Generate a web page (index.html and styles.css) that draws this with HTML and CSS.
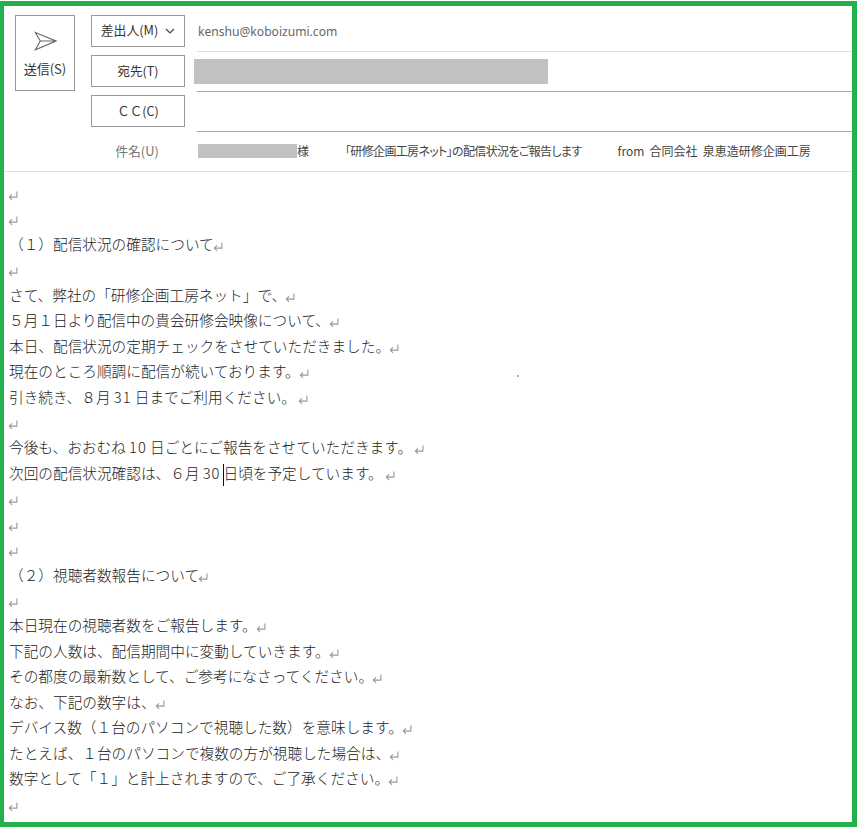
FILE: index.html
```html
<!DOCTYPE html>
<html lang="ja">
<head>
<meta charset="utf-8">
<title>メール作成</title>
<link rel="stylesheet" href="styles.css">
</head>
<body>
<svg class="defs" width="0" height="0" aria-hidden="true"><symbol id="ret" viewBox="0 0 9 9"><path d="M8 .5v5H1.2M3.6 3 1.2 5.5 3.6 8" fill="none" stroke="currentColor" stroke-width="1"/></symbol></svg>
<main class="frame">
  <header class="head">
    <button class="send">
      <svg class="send-icon" width="24" height="20" viewBox="0 0 24 20"><path d="M2.3 1.5 23 10 2.3 18.8 7.3 10ZM7.3 10H23" fill="none" stroke="#666" stroke-width="1.1" stroke-linejoin="miter"/></svg>
      <span>送信(S)</span>
    </button>
    <div class="fields">
      <div class="row">
        <button class="btn btn-from">差出人(M)<svg class="chev" width="10" height="6" viewBox="0 0 10 6"><path d="M1 1l4 4 4-4" fill="none" stroke="#444" stroke-width="1.2"/></svg></button>
        <div class="field field-light"><span class="from">kenshu@koboizumi.com</span></div>
      </div>
      <div class="row">
        <button class="btn">宛先(T)</button>
        <div class="field"><div class="redact-to"></div></div>
      </div>
      <div class="row">
        <button class="btn">ＣＣ(C)</button>
        <div class="field"></div>
      </div>
      <div class="row row-subject">
        <div class="label">件名(U)</div>
        <div class="subject">
          <span class="redact-name"></span><span class="sama">様</span>
          <span class="subj-title">「研修企画工房ネット」の配信状況をご報告します</span>
          <span class="subj-from">from 合同会社 泉恵造研修企画工房</span>
        </div>
      </div>
    </div>
  </header>
  <section class="body">
    <div class="line"><svg class="ret"><use href="#ret"/></svg></div>
    <div class="line"><svg class="ret"><use href="#ret"/></svg></div>
    <div class="line">（１）配信状況の確認について<svg class="ret"><use href="#ret"/></svg></div>
    <div class="line"><svg class="ret"><use href="#ret"/></svg></div>
    <div class="line">さて、弊社の「研修企画工房ネット」で、<svg class="ret"><use href="#ret"/></svg></div>
    <div class="line">５月１日より配信中の貴会研修会映像について、<svg class="ret"><use href="#ret"/></svg></div>
    <div class="line">本日、配信状況の定期チェックをさせていただきました。<svg class="ret"><use href="#ret"/></svg></div>
    <div class="line">現在のところ順調に配信が続いております。<svg class="ret"><use href="#ret"/></svg></div>
    <div class="line">引き続き、８月 <span class="num">31</span> 日までご利用ください。<svg class="ret"><use href="#ret"/></svg></div>
    <div class="line"><svg class="ret"><use href="#ret"/></svg></div>
    <div class="line">今後も、おおむね <span class="num">10</span> 日ごとにご報告をさせていただきます。<svg class="ret"><use href="#ret"/></svg></div>
    <div class="line">次回の配信状況確認は、６月 <span class="num">30</span><span class="caret"></span>日頃を予定しています。<svg class="ret"><use href="#ret"/></svg></div>
    <div class="line"><svg class="ret"><use href="#ret"/></svg></div>
    <div class="line"><svg class="ret"><use href="#ret"/></svg></div>
    <div class="line"><svg class="ret"><use href="#ret"/></svg></div>
    <div class="line">（２）視聴者数報告について<svg class="ret"><use href="#ret"/></svg></div>
    <div class="line"><svg class="ret"><use href="#ret"/></svg></div>
    <div class="line">本日現在の視聴者数をご報告します。<svg class="ret"><use href="#ret"/></svg></div>
    <div class="line">下記の人数は、配信期間中に変動していきます。<svg class="ret"><use href="#ret"/></svg></div>
    <div class="line">その都度の最新数として、ご参考になさってください。<svg class="ret"><use href="#ret"/></svg></div>
    <div class="line">なお、下記の数字は、<svg class="ret"><use href="#ret"/></svg></div>
    <div class="line">デバイス数（１台のパソコンで視聴した数）を意味します。<svg class="ret"><use href="#ret"/></svg></div>
    <div class="line">たとえば、１台のパソコンで複数の方が視聴した場合は、<svg class="ret"><use href="#ret"/></svg></div>
    <div class="line">数字として「１」と計上されますので、ご了承ください。<svg class="ret"><use href="#ret"/></svg></div>
    <div class="line"><svg class="ret"><use href="#ret"/></svg></div>
  </section>
  <span class="speck"></span>
</main>
</body>
</html>
```
FILE: styles.css
```css
* { box-sizing: border-box; }
html, body { margin: 0; padding: 0; background: #fff; }
body {
  width: 857px;
  height: 827px;
  padding-top: 1px;
  overflow: hidden;
  font-family: "Noto Sans CJK JP", "Noto Sans", sans-serif;
  color: #333;
}
.defs { position: absolute; }
.frame {
  position: relative;
  height: 826px;
  border: solid #22b14c;
  border-width: 5px 5px 5px 4px;
  overflow: hidden;
}
.speck { position: absolute; left: 513px; top: 369px; width: 2px; height: 2px; background: #aaa; }
.head {
  display: flex;
  gap: 16px;
  height: 166px;
  padding: 9px 0 0 11px;
  border-bottom: 1px solid #e0e0e0;
}
.send {
  display: flex;
  flex-direction: column;
  align-items: center;
  gap: 9px;
  width: 60px;
  height: 76px;
  padding: 15px 0 0;
  border: 1px solid #999;
  background: #fff;
  font: 13px/18px "Noto Sans CJK JP", sans-serif;
  color: #333;
}
.send-icon { margin-left: -1px; }
.fields { flex: 1; display: flex; flex-direction: column; gap: 3px; }
.row { display: flex; gap: 12px; height: 37px; }
.btn {
  display: flex;
  align-items: center;
  justify-content: center;
  gap: 7px;
  flex: none;
  width: 94px;
  height: 32px;
  padding: 0;
  border: 1px solid #999;
  background: #fff;
  font: 12.5px/18px "Noto Sans CJK JP", sans-serif;
  color: #333;
}
.btn-from { font-size: 12.8px; padding: 0 0 2px; }
.chev { flex: none; margin-top: 2px; }
.field { flex: 1; height: 37px; padding-top: 4px; border-bottom: 1px solid #aaa; }
.field-light { border-bottom-color: #e0e0e0; padding: 2px 0 0 1px; }
.from { font: 12.1px/18px "Noto Sans", sans-serif; color: #666; }
.redact-to { width: 354px; height: 25px; margin-left: -3px; background: #c1c1c1; }
.row-subject { height: 32px; align-items: center; }
.label { width: 94px; text-align: center; font-size: 12.8px; line-height: 18px; color: #777; padding-right: 2px; }
.subject { display: flex; align-items: center; font-size: 12px; line-height: 18px; padding-left: 1px; color: #444; }
.redact-name { width: 99px; height: 14px; background: #c1c1c1; }
.sama { width: 13px; }
.subj-title { margin-left: 35px; font-feature-settings: "palt"; letter-spacing: -.65px; }
.subj-from { margin-left: 36px; white-space: pre; word-spacing: 2.5px; }
.body { padding: 8px 0 0 5px; font-size: 14.67px; }
.line { height: 25.45px; line-height: 25.45px; white-space: nowrap; font-weight: 300; color: #222; }
.num { letter-spacing: 1px; }
.ret { display: inline-block; width: 10px; height: 10px; margin-left: 2px; color: #999; vertical-align: -2px; }
.line > .ret:first-child { margin-left: -1px; }
.caret { display: inline-block; width: 1px; height: 22px; margin: 0 -1px 0 3px; background: #111; vertical-align: middle; }
```
